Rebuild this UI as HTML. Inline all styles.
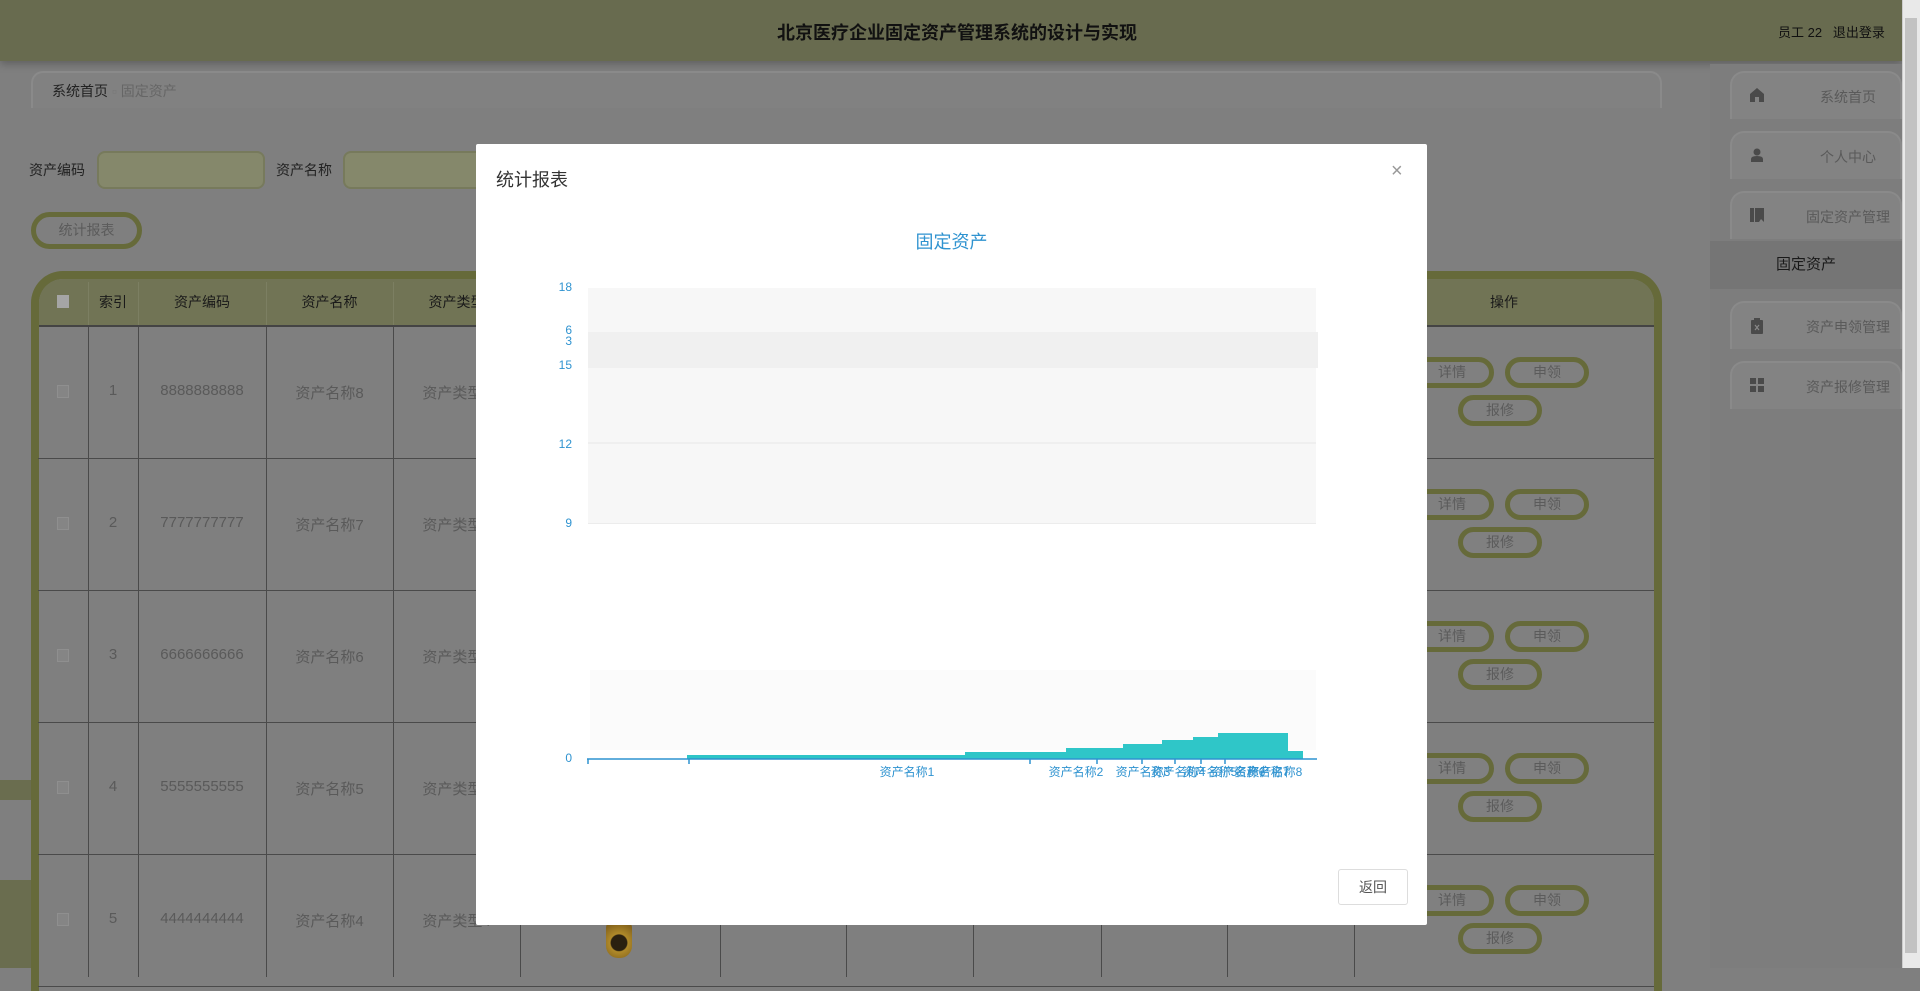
<!DOCTYPE html>
<html><head><meta charset="utf-8"><style>
*{box-sizing:border-box;margin:0;padding:0}
body{width:1920px;height:968px;overflow:hidden;background:#7f7f7f;font-family:"Liberation Sans","Noto Sans CJK SC",sans-serif;position:relative;color:#555}
.a{position:absolute}
.hdr{left:0;top:0;width:1902px;height:61px;background:#686b4f;box-shadow:0 3px 8px rgba(0,0,0,.25)}
.sb{left:1902px;top:0;width:18px;height:968px;background:#e9e9e9;border-left:1px solid #ccc}
.sbt{left:1905px;top:18px;width:12px;height:935px;background:#c2c2c2}
.nav{left:1730px;width:172px;height:48px;border:2px solid #8a8a8a;border-bottom:none;border-radius:14px 14px 0 0;background:#838383;font-size:14px;color:#5a5a5a}
.nav span{position:absolute;left:60px;width:112px;text-align:center;top:14px}
.nav svg{position:absolute;left:18px;top:15px}
.cell{position:absolute;text-align:center;font-size:15px;color:#5a5a5a}
.btn{position:absolute;width:84px;height:31px;border:5px solid #666a3a;border-radius:16px;text-align:center;font-size:14px;line-height:21px;color:#5b5b5b;background:#808080}
</style></head><body>
<div class="a hdr"></div>
<div class="a" style="left:0;top:19px;width:1914px;text-align:center;font-size:18px;font-weight:bold;color:#111">北京医疗企业固定资产管理系统的设计与实现</div>
<div class="a" style="left:1778px;top:22px;font-size:13px;color:#111">员工 22 &nbsp;&nbsp;退出登录</div>
<div class="a sb"></div><div class="a sbt"></div>

<div class="a" style="left:31px;top:71px;width:1631px;height:37px;border:2px solid #8a8a8a;border-bottom:none;border-radius:12px 12px 0 0;background:#818181"></div>
<div class="a" style="left:52px;top:81px;font-size:14px;color:#222">系统首页 <span style="color:#777">▫</span> <span style="color:#666">固定资产</span></div>

<div class="a" style="left:1710px;top:64px;width:192px;height:904px;background:#7d7d7d"></div>
<div class="a nav" style="top:71px"><svg width="14" height="14"><path d="M7 0L0 6V14H5V9H9V14H14V6Z" fill="#4a4a4a"/></svg><span>系统首页</span></div>
<div class="a nav" style="top:131px"><svg width="14" height="14"><circle cx="7" cy="4" r="3.5" fill="#4a4a4a"/><path d="M1 14V11Q1 8 7 8Q13 8 13 11V14Z" fill="#4a4a4a"/></svg><span>个人中心</span></div>
<div class="a nav" style="top:191px"><svg width="14" height="14"><rect x="0" y="0" width="4" height="14" fill="#4a4a4a"/><path d="M5 0H14V14L11 11L9 14H5Z" fill="#4a4a4a"/></svg><span>固定资产管理</span></div>
<div class="a" style="left:1710px;top:241px;width:192px;height:48px;background:#757575;text-align:center;font-size:15px;color:#1a1a1a;line-height:48px">固定资产</div>
<div class="a nav" style="top:301px"><svg width="14" height="16"><rect x="1" y="2" width="12" height="14" rx="1" fill="#4a4a4a"/><rect x="4" y="0" width="6" height="3" fill="#4a4a4a"/><path d="M5 7L9 12M9 7L5 12" stroke="#888" stroke-width="1.2"/></svg><span>资产申领管理</span></div>
<div class="a nav" style="top:361px"><svg width="14" height="14"><rect x="0" y="0" width="6" height="6" fill="#4a4a4a"/><rect x="8" y="0" width="6" height="6" fill="#4a4a4a"/><rect x="0" y="8" width="6" height="6" fill="#4a4a4a"/><rect x="8" y="8" width="6" height="6" fill="#4a4a4a"/></svg><span>资产报修管理</span></div>

<div class="a" style="left:29px;top:160px;font-size:14px;color:#222">资产编码</div>
<div class="a" style="left:97px;top:151px;width:168px;height:38px;background:#85886b;border-radius:8px;border:2px solid #777a5c"></div>
<div class="a" style="left:276px;top:160px;font-size:14px;color:#222">资产名称</div>
<div class="a" style="left:343px;top:151px;width:160px;height:38px;background:#85886b;border-radius:8px;border:2px solid #777a5c"></div>
<div class="a" style="left:31px;top:212px;width:111px;height:37px;border:5px solid #666a3a;border-radius:19px;text-align:center;line-height:27px;font-size:14px;color:#5b5b5b">统计报表</div>

<div class="a" style="left:31px;top:271px;width:1631px;height:720px;border:8px solid #666a3a;border-bottom:none;border-radius:32px 32px 0 0;background:#7f7f7f"></div>
<div class="a" style="left:39px;top:279px;width:1615px;height:47px;background:#717455;border-radius:24px 24px 0 0"></div>
<div class="a" style="left:39px;top:325px;width:1615px;height:2px;background:#444"></div>
<div class="a" style="left:57px;top:295px;width:12px;height:13px;background:#a5a5a5"></div>
<div id="tbl"></div>

<div class="a" style="left:0;top:780px;width:31px;height:20px;background:#6a6d4f"></div>
<div class="a" style="left:0;top:880px;width:31px;height:88px;background:#6a6d4f"></div>
<div class="a" style="left:606px;top:920px;width:26px;height:38px;border-radius:8px 8px 12px 12px;background:radial-gradient(circle at 50% 60%,#2a2010 30%,#b08a2a 34%,#7a5a18 85%)"></div>

<div class="a" style="left:476px;top:144px;width:951px;height:781px;background:#fff;border-radius:2px"></div>
<div class="a" style="left:496px;top:166px;font-size:18px;color:#333">统计报表</div>
<div class="a" style="left:1391px;top:160px;font-size:20px;color:#999;font-weight:300">×</div>
<div class="a" style="left:476px;top:228px;width:951px;text-align:center;font-size:18px;color:#2f93d0">固定资产</div>
<div class="a" style="left:588px;top:288px;width:728px;height:236px;background:#f7f7f7"></div>
<div class="a" style="left:588px;top:332px;width:730px;height:36px;background:#f0f0f0"></div>
<div class="a" style="left:588px;top:442px;width:728px;height:2px;background:#efefef"></div>
<div class="a" style="left:588px;top:523px;width:728px;height:1px;background:#ececec"></div>
<div class="a" style="left:590px;top:670px;width:726px;height:80px;background:#fbfbfb"></div>
<div class="a" style="left:540px;top:280px;width:32px;font-size:12px;color:#2f93d0;text-align:right;line-height:14px">18</div>
<div class="a" style="left:540px;top:325px;width:32px;font-size:12px;color:#2f93d0;text-align:right;line-height:11px">6<br>3</div>
<div class="a" style="left:540px;top:358px;width:32px;font-size:12px;color:#2f93d0;text-align:right">15</div>
<div class="a" style="left:540px;top:437px;width:32px;font-size:12px;color:#2f93d0;text-align:right">12</div>
<div class="a" style="left:540px;top:516px;width:32px;font-size:12px;color:#2f93d0;text-align:right">9</div>
<div class="a" style="left:540px;top:751px;width:32px;font-size:12px;color:#2f93d0;text-align:right">0</div>
<svg class="a" style="left:0;top:0" width="1920" height="968">
<g fill="#2fc6c8">
<rect x="687" y="755" width="278" height="4"/>
<rect x="965" y="752" width="101" height="7"/>
<rect x="1066" y="748" width="57" height="11"/>
<rect x="1123" y="744" width="39" height="15"/>
<rect x="1162" y="740" width="31" height="19"/>
<rect x="1193" y="737" width="25" height="22"/>
<rect x="1218" y="733" width="70" height="26"/>
<rect x="1288" y="751" width="15" height="8"/>
</g>
<g stroke="#2f93d0" stroke-width="1.5">
<line x1="587" y1="759" x2="1317" y2="759"/>
<line x1="588" y1="759" x2="588" y2="764"/>
<line x1="689" y1="759" x2="689" y2="764"/>
<line x1="1030" y1="759" x2="1030" y2="764"/>
<line x1="1097" y1="759" x2="1097" y2="764"/>
<line x1="1142" y1="759" x2="1142" y2="764"/>
<line x1="1175" y1="759" x2="1175" y2="764"/>
<line x1="1201" y1="759" x2="1201" y2="764"/>
<line x1="1225" y1="759" x2="1225" y2="764"/>
</g>
<g fill="#2f93d0" font-size="12" font-family="Liberation Sans,Noto Sans CJK SC,sans-serif" text-anchor="middle">
<text x="907" y="776">资产名称1</text>
<text x="1076" y="776">资产名称2</text>
<text x="1143" y="776">资产名称3</text>
<text x="1178" y="776">资产名称4</text>
<text x="1210" y="776">资产名称5</text>
<text x="1238" y="776">资产名称6</text>
<text x="1262" y="776">资产名称7</text>
<text x="1275" y="776">资产名称8</text>
</g>
</svg>
<div class="a" style="left:1338px;top:869px;width:70px;height:36px;border:1px solid #ddd;border-radius:3px;text-align:center;line-height:34px;font-size:14px;color:#555">返回</div>

<script>
var cols=[38,88,138,266,393,520,720,846,973,1101,1227,1354,1654];
var h='';
for(var i=1;i<cols.length-1;i++){h+='<div class="a" style="left:'+cols[i]+'px;top:327px;width:1px;height:650px;background:#4a4a4a"></div>';h+='<div class="a" style="left:'+cols[i]+'px;top:282px;width:1px;height:43px;background:#7c7f62"></div>';}
var heads=['','索引','资产编码','资产名称','资产类型'];
for(var i=1;i<5;i++){h+='<div class="cell" style="left:'+cols[i]+'px;top:292px;width:'+(cols[i+1]-cols[i])+'px;color:#1a1a1a;font-size:14px">'+heads[i]+'</div>';}
h+='<div class="cell" style="left:1354px;top:292px;width:300px;color:#1a1a1a;font-size:14px">操作</div>';
for(var r=0;r<5;r++){
 var y=326+r*132;
 h+='<div class="a" style="left:38px;top:'+(y+132)+'px;width:1616px;height:1px;background:#4a4a4a"></div>';
 var n=8-r, code=String(n).repeat(10);
 var vals=['',String(r+1),code,'资产名称'+n,'资产类型'+n];
 h+='<div class="a" style="left:57px;top:'+(y+59)+'px;width:12px;height:13px;background:#858585;border:1px solid #8f8f8f"></div>';
 for(var c=1;c<5;c++){h+='<div class="cell" style="left:'+cols[c]+'px;top:'+(y+56)+'px;width:'+(cols[c+1]-cols[c])+'px">'+vals[c]+'</div>';}
 h+='<div class="btn" style="left:1410px;top:'+(y+31)+'px">详情</div>';
 h+='<div class="btn" style="left:1505px;top:'+(y+31)+'px">申领</div>';
 h+='<div class="btn" style="left:1458px;top:'+(y+69)+'px">报修</div>';
}
document.getElementById('tbl').innerHTML=h;
</script>
</body></html>
